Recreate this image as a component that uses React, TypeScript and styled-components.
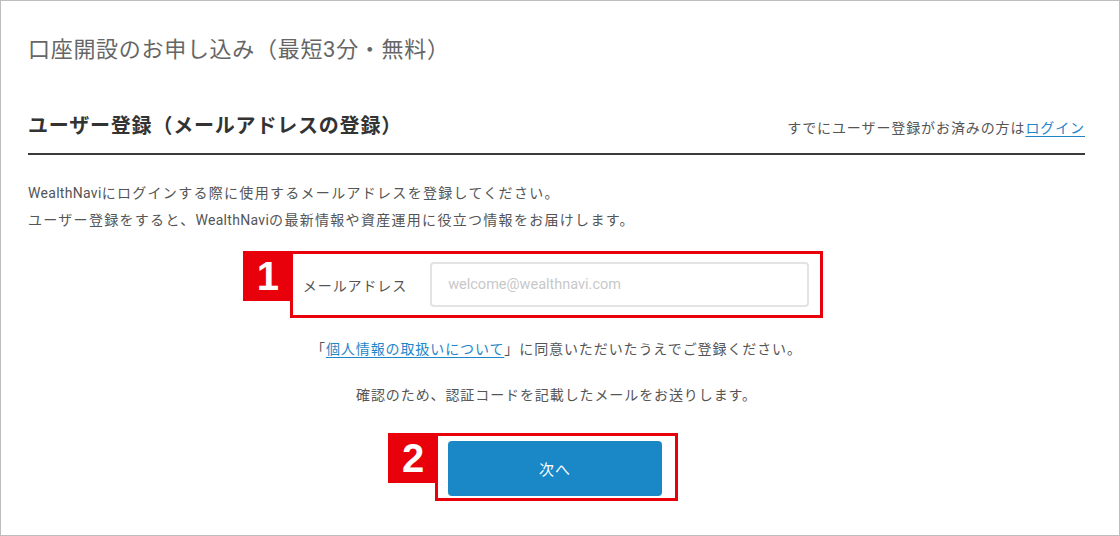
import React from "react";
import styled, { createGlobalStyle } from "styled-components";

const Global = createGlobalStyle`
  html, body { margin: 0; padding: 0; background: #fff; }
  body {
    font-family: Roboto, "Noto Sans CJK JP", "Noto Sans", sans-serif;
    color: #555;
  }
  * { box-sizing: border-box; }
`;

const Page = styled.div`
  width: 1120px;
  height: 536px;
  border: 1px solid #bdbdbd;
  padding: 33px 34px 0 27px;
  display: flex;
  flex-direction: column;
  overflow: hidden;
`;

const Title = styled.h1`
  margin: 0;
  font-size: 22px;
  line-height: 32px;
  font-weight: 400;
  letter-spacing: 0.7px;
  color: #666;
`;

const HeaderRow = styled.div`
  margin-top: 45px;
  display: flex;
  justify-content: space-between;
  align-items: baseline;
  padding-bottom: 12px;
  border-bottom: 2px solid #3a3a3a;
`;

const Heading = styled.h2`
  margin: 0;
  font-size: 20px;
  line-height: 30px;
  font-weight: 700;
  letter-spacing: 0.8px;
  color: #333;
`;

const SideNote = styled.p`
  margin: 0;
  font-size: 14px;
  line-height: 20px;
  letter-spacing: 0.9px;
  color: #555;
`;

const Link = styled.a`
  color: #1f86c9;
  text-decoration: underline;
  text-underline-offset: 3px;
  cursor: pointer;
`;

const Intro = styled.p`
  margin: 25px 0 0;
  font-size: 14px;
  line-height: 27px;
  letter-spacing: 1.3px;
  color: #555;
`;

const Latin = styled.span`
  letter-spacing: 0.3px;
`;

const Annotated = styled.div<{ $pad: string; $mt?: number }>`
  position: relative;
  align-self: center;
  margin-top: ${(p) => p.$mt ?? 0}px;
  border: 3px solid #e8000b;
  padding: ${(p) => p.$pad};
`;

const Badge = styled.span<{ $w: number; $h: number }>`
  position: absolute;
  top: -3px;
  left: ${(p) => -p.$w}px;
  width: ${(p) => p.$w}px;
  height: ${(p) => p.$h}px;
  background: #e8000b;
  color: #fff;
  font-family: "Liberation Sans", Arial, sans-serif;
  font-weight: 700;
  font-size: 40px;
  line-height: ${(p) => p.$h}px;
  text-align: center;
`;

const FieldRow = styled.label`
  display: flex;
  align-items: center;
  gap: 23px;
`;

const FieldLabel = styled.span`
  font-size: 14px;
  letter-spacing: 0.9px;
  color: #555;
  white-space: nowrap;
`;

const Input = styled.input`
  width: 379px;
  height: 45px;
  border: 2px solid #e3e3e3;
  border-radius: 4px;
  padding: 0 16px;
  font-family: Roboto, "Noto Sans CJK JP", sans-serif;
  font-size: 14.5px;
  color: #333;
  outline: none;
  &::placeholder { color: #c8c8c8; }
`;

const Centered = styled.p<{ $mt: number }>`
  margin: ${(p) => p.$mt}px 0 0;
  text-align: center;
  font-size: 14px;
  line-height: 24px;
  letter-spacing: 0.9px;
  color: #555;
`;

const ButtonSlot = styled.div`
  margin-top: 26px;
  align-self: center;
  display: flex;
`;

const NextButton = styled.button`
  width: 214px;
  height: 55px;
  border: none;
  border-radius: 4px;
  background: #1a87c7;
  color: #fff;
  font-family: "Noto Sans CJK JP", sans-serif;
  font-size: 15px;
  letter-spacing: 1px;
  cursor: pointer;
`;

export default function App() {
  return (
    <>
      <Global />
      <Page>
        <Title>口座開設のお申し込み（最短3分・無料）</Title>
        <HeaderRow>
          <Heading>ユーザー登録（メールアドレスの登録）</Heading>
          <SideNote>
            すでにユーザー登録がお済みの方は<Link>ログイン</Link>
          </SideNote>
        </HeaderRow>
        <Intro>
          <Latin>WealthNavi</Latin>にログインする際に使用するメールアドレスを登録してください。
          <br />
          ユーザー登録をすると、<Latin>WealthNavi</Latin>の最新情報や資産運用に役立つ情報をお届けします。
        </Intro>
        <Annotated $pad="8px 11px 8px 10px" $mt={17}>
          <Badge $w={50} $h={50}>1</Badge>
          <FieldRow>
            <FieldLabel>メールアドレス</FieldLabel>
            <Input type="email" placeholder="welcome@wealthnavi.com" />
          </FieldRow>
        </Annotated>
        <Centered $mt={19}>
          「<Link>個人情報の取扱いについて</Link>」に同意いただいたうえでご登録ください。
        </Centered>
        <Centered $mt={22}>確認のため、認証コードを記載したメールをお送りします。</Centered>
        <ButtonSlot>
          <Annotated $pad="5px 13px 2px 10px">
            <Badge $w={50} $h={50}>2</Badge>
            <NextButton>次へ</NextButton>
          </Annotated>
        </ButtonSlot>
      </Page>
    </>
  );
}
